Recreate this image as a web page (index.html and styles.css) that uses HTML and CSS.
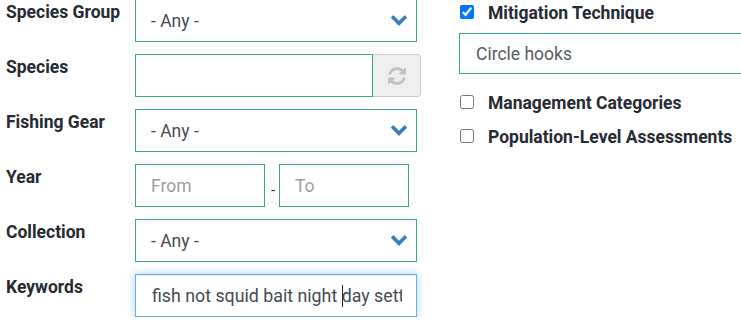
FILE: index.html
```html
<!DOCTYPE html>
<html>
<head>
<meta charset="utf-8">
<link rel="stylesheet" href="styles.css">
</head>
<body>
<div class="page">
  <div class="form-left">
    <div class="label">Species Group</div>
    <div class="select">
      <span class="select-text">- Any -</span>
      <svg class="chevron" viewBox="90 530 1612 1040"><path d="M1683 808l-742 741q-19 19-45 19t-45-19L109 808q-19-19-19-45.5t19-45.5l166-165q19-19 45-19t45 19l531 531 531-531q19-19 45-19t45 19l166 165q19 19 19 45.5t-19 45.5z"/></svg>
    </div>

    <div class="label">Species</div>
    <div class="input-group">
      <div class="input species-input"></div>
      <div class="addon">
        <svg class="refresh" viewBox="0 0 1536 1536"><path d="M1511 928q0 5-1 7-64 268-268 434.5T764 1536q-146 0-282.5-55T238 1324l-129 129q-19 19-45 19t-45-19-19-45V960q0-26 19-45t45-19h448q26 0 45 19t19 45-19 45l-137 137q71 66 161 102t187 36q134 0 250-65t186-179q11-17 53-117 8-23 30-23h192q13 0 22.5 9.5t9.5 22.5zm25-800v448q0 26-19 45t-45 19h-448q-26 0-45-19t-19-45 19-45l138-138Q969 256 768 256q-134 0-250 65T332 500q-11 17-53 117-8 23-30 23H50q-13 0-22.5-9.5T18 608v-7q65-268 270-434.5T768 0q146 0 284 55.5T1297 212l130-129q19-19 45-19t45 19 19 45z"/></svg>
      </div>
    </div>

    <div class="label">Fishing Gear</div>
    <div class="select">
      <span class="select-text">- Any -</span>
      <svg class="chevron" viewBox="90 530 1612 1040"><path d="M1683 808l-742 741q-19 19-45 19t-45-19L109 808q-19-19-19-45.5t19-45.5l166-165q19-19 45-19t45 19l531 531 531-531q19-19 45-19t45 19l166 165q19 19 19 45.5t-19 45.5z"/></svg>
    </div>

    <div class="label">Year</div>
    <div class="year-range">
      <div class="input year-input"><span class="placeholder">From</span></div>
      <span class="dash">-</span>
      <div class="input year-input"><span class="placeholder">To</span></div>
    </div>

    <div class="label">Collection</div>
    <div class="select">
      <span class="select-text">- Any -</span>
      <svg class="chevron" viewBox="90 530 1612 1040"><path d="M1683 808l-742 741q-19 19-45 19t-45-19L109 808q-19-19-19-45.5t19-45.5l166-165q19-19 45-19t45 19l531 531 531-531q19-19 45-19t45 19l166 165q19 19 19 45.5t-19 45.5z"/></svg>
    </div>

    <div class="label">Keywords</div>
    <div class="input keywords-input focused">
      <span class="kw-text">fish not squid bait night <span class="caret"></span>day setting</span>
    </div>
  </div>

  <div class="form-right">
    <label class="check-row">
      <input type="checkbox" class="check" checked>
      <span class="check-label">Mitigation Technique</span>
    </label>
    <div class="input technique-input"><span class="value-text">Circle hooks</span></div>
    <label class="check-row management">
      <input type="checkbox" class="check">
      <span class="check-label">Management Categories</span>
    </label>
    <label class="check-row population">
      <input type="checkbox" class="check">
      <span class="check-label">Population-Level Assessments</span>
    </label>
  </div>
</div>
</body>
</html>
```

FILE: styles.css
```css
html, body {
  margin: 0;
  padding: 0;
  background: #ffffff;
  overflow: hidden;
}

body {
  font-family: Roboto, "Liberation Sans", sans-serif;
  font-size: 17.5px;
  color: #333333;
}

.page {
  display: grid;
  grid-template-columns: 421px 1fr;
  column-gap: 38px;
  align-items: start;
}

.form-left {
  display: grid;
  grid-template-columns: 135px auto;
  row-gap: 12px;
  margin-top: -1px;
}

.label {
  padding-left: 6px;
  padding-top: 1px;
  font-weight: 700;
  line-height: 24px;
  color: #262a33;
}

.select,
.input {
  box-sizing: border-box;
  height: 43px;
  border: 1px solid #3aa68a;
  background: #ffffff;
  display: flex;
  align-items: center;
  padding: 0 15px;
  color: #444b55;
}

.select {
  width: 282px;
  justify-content: space-between;
  padding-right: 9px;
}

.chevron {
  width: 16px;
  height: 11px;
  fill: #3b7bbf;
}

.input-group {
  display: flex;
  width: 286px;
}

.species-input {
  width: 238px;
}

.addon {
  box-sizing: border-box;
  width: 48px;
  height: 43px;
  background: #eeeeee;
  border: 1px solid #cccccc;
  border-left: none;
  border-radius: 0 4px 4px 0;
  display: flex;
  align-items: center;
  justify-content: center;
}

.refresh {
  width: 18px;
  height: 18px;
  fill: #c2c2c2;
}

.year-range {
  display: flex;
  align-items: flex-start;
}

.year-input {
  width: 130px;
}

.placeholder {
  color: #9a9fa6;
}

.dash {
  width: 14px;
  text-align: center;
  padding-top: 16px;
  padding-left: 2px;
  box-sizing: border-box;
  font-size: 15px;
  line-height: 20px;
  color: #333333;
}

.keywords-input {
  width: 282px;
  overflow: hidden;
  white-space: nowrap;
  padding-left: 16px;
  padding-right: 14px;
  font-size: 17.8px;
}

.keywords-input.focused {
  border-color: #66afe9;
  box-shadow: inset 0 1px 1px rgba(0, 0, 0, 0.075), 0 0 8px rgba(102, 175, 233, 0.6);
}

.kw-text {
  display: block;
  flex: 1;
  min-width: 0;
  overflow: hidden;
}

.caret {
  display: inline-block;
  width: 1px;
  height: 22px;
  background: #222222;
  vertical-align: -5px;
  margin-right: -1px;
}

.form-right {
  display: flex;
  flex-direction: column;
  padding-top: 3px;
}

.check-row {
  display: flex;
  align-items: flex-start;
  height: 20px;
}

.check {
  width: 14px;
  height: 14px;
  margin: 2px 14px 0 1px;
  accent-color: #0075ff;
}

.check-label {
  font-weight: 700;
  line-height: 20px;
  color: #262a33;
}

.technique-input {
  margin-top: 10px;
  width: 320px;
  height: 41px;
  padding-left: 16px;
}

.value-text {
  color: #555b63;
}

.management {
  margin-top: 19px;
}

.population {
  margin-top: 14px;
}
```
